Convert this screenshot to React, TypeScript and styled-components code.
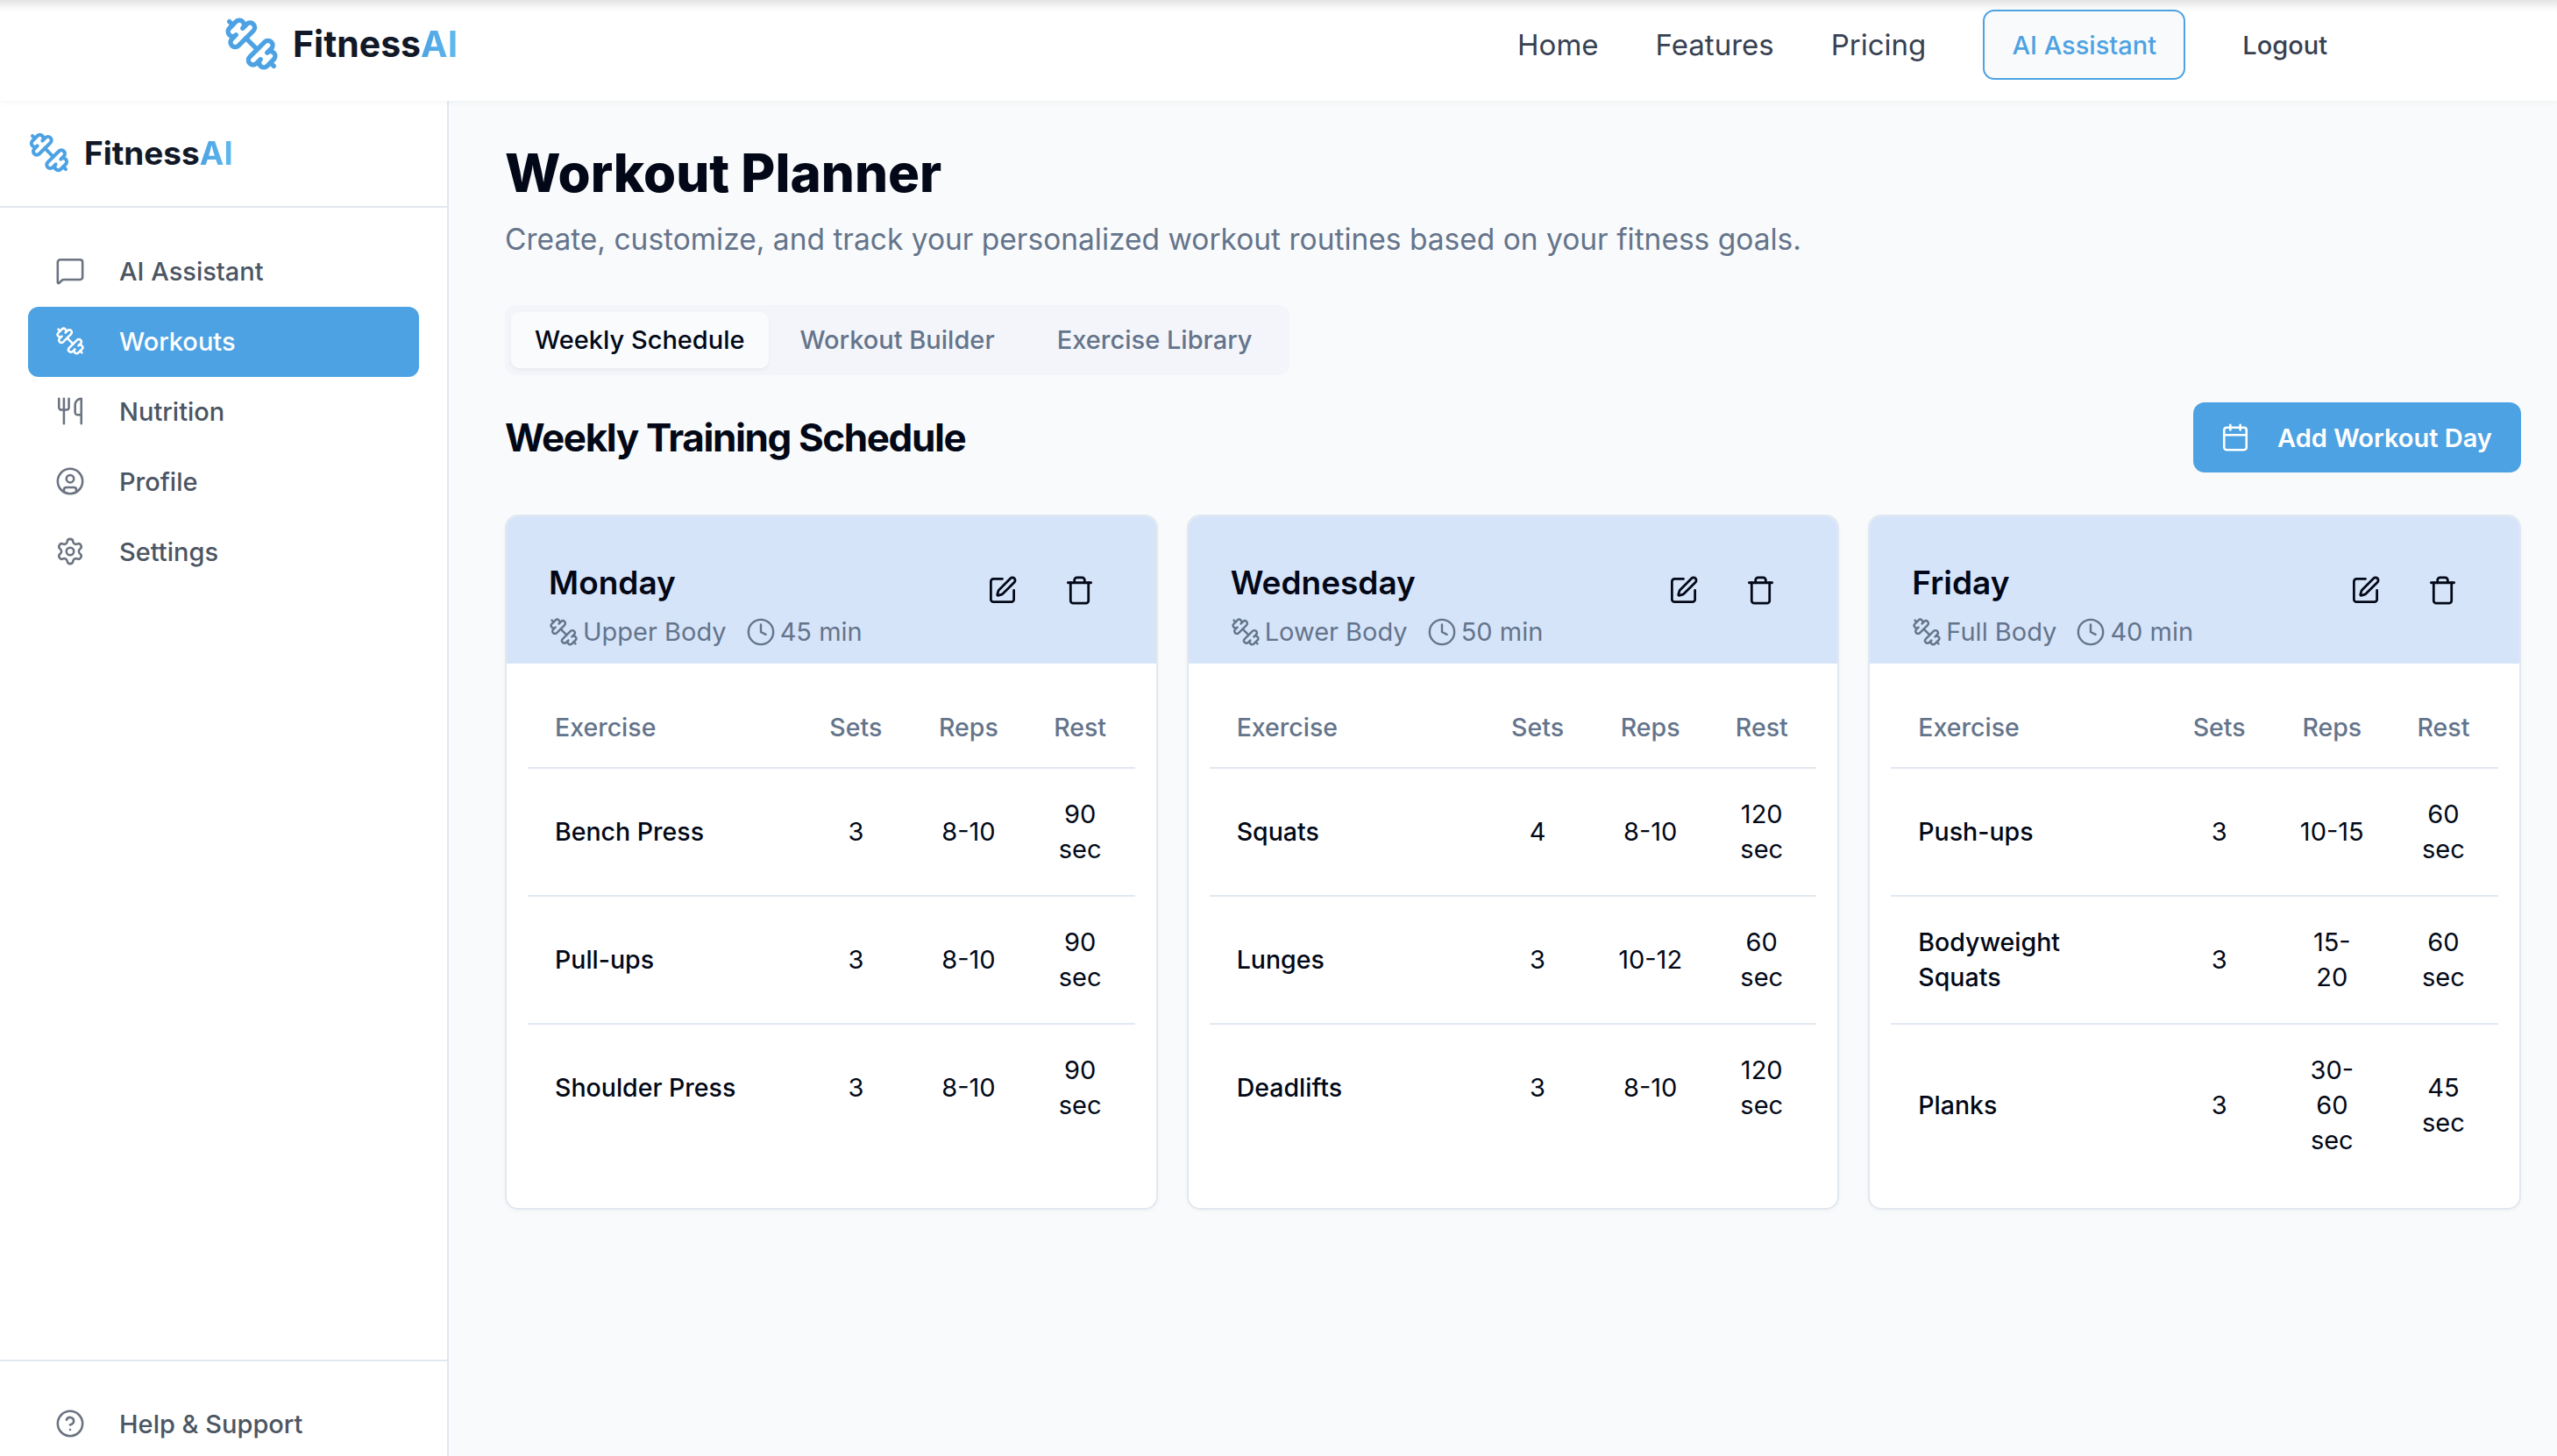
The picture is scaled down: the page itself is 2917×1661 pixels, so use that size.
import React from "react";
import styled, { createGlobalStyle } from "styled-components";
import {
  Calendar,
  CircleHelp,
  CircleUser,
  Clock,
  Dumbbell,
  MessageSquare,
  Settings,
  SquarePen,
  Trash,
  Utensils,
} from "lucide-react";

interface Exercise {
  name: string;
  sets: number;
  reps: string;
  rest: string;
}

interface WorkoutDay {
  day: string;
  focus: string;
  duration: string;
  exercises: Exercise[];
}

// the bar in the picture runs top-left to bottom-right
const BarbellIcon = styled(Dumbbell)`
  transform: scaleX(-1);
  flex-shrink: 0;
`;

const DAYS: WorkoutDay[] = [
  {
    day: "Monday",
    focus: "Upper Body",
    duration: "45 min",
    exercises: [
      { name: "Bench Press", sets: 3, reps: "8-10", rest: "90\nsec" },
      { name: "Pull-ups", sets: 3, reps: "8-10", rest: "90\nsec" },
      { name: "Shoulder Press", sets: 3, reps: "8-10", rest: "90\nsec" },
    ],
  },
  {
    day: "Wednesday",
    focus: "Lower Body",
    duration: "50 min",
    exercises: [
      { name: "Squats", sets: 4, reps: "8-10", rest: "120\nsec" },
      { name: "Lunges", sets: 3, reps: "10-12", rest: "60\nsec" },
      { name: "Deadlifts", sets: 3, reps: "8-10", rest: "120\nsec" },
    ],
  },
  {
    day: "Friday",
    focus: "Full Body",
    duration: "40 min",
    exercises: [
      { name: "Push-ups", sets: 3, reps: "10-15", rest: "60\nsec" },
      { name: "Bodyweight\nSquats", sets: 3, reps: "15-\n20", rest: "60\nsec" },
      { name: "Planks", sets: 3, reps: "30-\n60\nsec", rest: "45\nsec" },
    ],
  },
];

const SIDE_ITEMS = [
  { label: "AI Assistant", icon: MessageSquare },
  { label: "Workouts", icon: BarbellIcon, active: true },
  { label: "Nutrition", icon: Utensils },
  { label: "Profile", icon: CircleUser },
  { label: "Settings", icon: Settings },
];

const GlobalStyle = createGlobalStyle`
  html, body {
    margin: 0;
    height: 100%;
    overflow: hidden;
    background: #ffffff;
    font-family: "Inter", "Liberation Sans", sans-serif;
  }
  * { box-sizing: border-box; }
`;

const Page = styled.div`
  height: 100vh;
  display: flex;
  flex-direction: column;
  overflow: hidden;
`;

const TopNav = styled.header`
  height: 115px;
  flex-shrink: 0;
  display: flex;
  align-items: flex-start;
  justify-content: space-between;
  padding: 11px 262px 0 255px;
  background: #fff;
  box-shadow: inset 0 14px 12px -10px rgba(0, 0, 0, 0.14), 0 2px 6px rgba(0, 0, 0, 0.04);
  position: relative;
  z-index: 2;
`;

const Brand = styled.div<{ $small?: boolean }>`
  display: flex;
  align-items: center;
  gap: ${({ $small }) => ($small ? "16px" : "15px")};
  height: ${({ $small }) => ($small ? "auto" : "80px")};
  padding-bottom: 2px;
  font-size: ${({ $small }) => ($small ? "37px" : "41px")};
  font-weight: 700;
  color: #111827;
`;

const BrandAccent = styled.span`
  color: #4da2e3;
  background: linear-gradient(90deg, #4da2e3, #60bbee);
  -webkit-background-clip: text;
  background-clip: text;
  -webkit-text-fill-color: transparent;
`;

const NavLinks = styled.nav`
  display: flex;
  align-items: center;
  height: 80px;
`;

const NavLink = styled.a`
  font-size: 33px;
  color: #374151;
  margin-right: 65px;
`;

const AssistantButton = styled.button`
  width: 231px;
  height: 80px;
  border: 2px solid #4da2e3;
  border-radius: 13px;
  background: #f9fafb;
  color: #4da2e3;
  font: 500 29px "Inter", sans-serif;
  margin-right: 65px;
`;

const LogoutLink = styled.a`
  font-size: 29px;
  font-weight: 500;
  color: #374151;
`;

const Body = styled.div`
  flex: 1;
  min-height: 0;
  display: flex;
`;

const Sidebar = styled.aside`
  width: 512px;
  flex-shrink: 0;
  display: flex;
  flex-direction: column;
  background: #fff;
  border-right: 2px solid #e2e8f0;
`;

const SidebarHead = styled.div`
  height: 122px;
  display: flex;
  align-items: center;
  padding: 0 32px;
  border-bottom: 2px solid #e2e8f0;
`;

const SideList = styled.ul`
  flex: 1;
  list-style: none;
  margin: 0;
  padding: 33px 32px 0;
  display: flex;
  flex-direction: column;
`;

const SideItem = styled.li<{ $active?: boolean }>`
  height: 80px;
  display: flex;
  align-items: center;
  gap: 39px;
  padding: 0 0 2px 31px;
  border-radius: 12px;
  font-size: 29px;
  font-weight: 500;
  color: ${({ $active }) => ($active ? "#ffffff" : "#4b5563")};
  background: ${({ $active }) => ($active ? "#4da2e3" : "transparent")};
  svg {
    color: ${({ $active }) => ($active ? "#ffffff" : "#6b7280")};
  }
`;

const SideFooter = styled.div`
  border-top: 2px solid #e2e8f0;
  padding: 32px 32px 0;
  height: 110px;
  flex-shrink: 0;
`;

const Main = styled.main`
  flex: 1;
  min-width: 0;
  background: #f9fafb;
  padding: 47px 41px 0 64px;
`;

const Title = styled.h1`
  margin: 0;
  font-size: 60px;
  line-height: 70px;
  font-weight: 800;
  color: #020817;
`;

const Subtitle = styled.p`
  margin: 17px 0 0;
  font-size: 33.5px;
  line-height: 48px;
  color: #64748b;
`;

const Tabs = styled.div`
  margin-top: 51px;
  width: 895px;
  height: 80px;
  display: grid;
  grid-template-columns: repeat(3, 1fr);
  align-items: center;
  padding: 0 7px;
  border-radius: 12px;
  background: #f3f5fa;
`;

const Tab = styled.div<{ $active?: boolean }>`
  height: 64px;
  display: flex;
  align-items: center;
  justify-content: center;
  padding-bottom: 2px;
  border-radius: 9px;
  font-size: 29px;
  font-weight: 500;
  color: ${({ $active }) => ($active ? "#020817" : "#64748b")};
  background: ${({ $active }) => ($active ? "#f9fbfd" : "transparent")};
  box-shadow: ${({ $active }) => ($active ? "0 2px 4px rgba(0, 0, 0, 0.05)" : "none")};
`;

const SectionHead = styled.div`
  margin-top: 31px;
  display: flex;
  align-items: center;
  justify-content: space-between;
`;

const SectionTitle = styled.h2`
  margin: 0;
  font-size: 44px;
  font-weight: 700;
  letter-spacing: -1.4px;
  color: #020817;
`;

const AddButton = styled.button`
  width: 374px;
  height: 80px;
  display: flex;
  align-items: center;
  gap: 31px;
  padding: 0 0 0 31px;
  border: 0;
  border-radius: 13px;
  background: #4da2e3;
  color: #fff;
  font: 600 29px "Inter", sans-serif;
`;

const CardGrid = styled.div`
  margin-top: 48px;
  display: grid;
  grid-template-columns: repeat(3, 1fr);
  gap: 33px;
`;

const Card = styled.section`
  height: 793px;
  border: 2px solid #e2e8f0;
  border-radius: 15px;
  background: #fff;
  overflow: hidden;
  box-shadow: 0 2px 4px rgba(0, 0, 0, 0.03);
`;

const CardHead = styled.div`
  height: 168px;
  display: flex;
  justify-content: space-between;
  padding: 53px 70px 0 48px;
  background: #d6e4fa;
`;

const DayName = styled.h3`
  margin: 0;
  font-size: 37px;
  line-height: 46px;
  font-weight: 600;
  color: #020817;
`;

const DayMeta = styled.div`
  margin-top: 13px;
  display: flex;
  align-items: center;
  gap: 5px;
  font-size: 29px;
  line-height: 40px;
  color: #64748b;
`;

const MetaGap = styled.span`
  width: 12px;
`;

const CardActions = styled.div`
  display: flex;
  gap: 53px;
  padding-top: 14px;
  color: #020817;
`;

const CardBody = styled.div`
  padding: 0 24px;
`;

const Table = styled.table`
  width: 100%;
  table-layout: fixed;
  border-collapse: collapse;
`;

const HeadCell = styled.th<{ $left?: boolean }>`
  height: 119px;
  padding: 26px 0 0 ${({ $left }) => ($left ? "31px" : "0")};
  font-size: 28.5px;
  font-weight: 500;
  color: #64748b;
  text-align: ${({ $left }) => ($left ? "left" : "center")};
  border-bottom: 2px solid #e2e8f0;
`;

const Row = styled.tr`
  & + & td {
    border-top: 2px solid #e2e8f0;
  }
`;

const Cell = styled.td<{ $name?: boolean }>`
  padding: 32px 0 32px ${({ $name }) => ($name ? "31px" : "0")};
  font-size: ${({ $name }) => ($name ? "28.5px" : "29px")};
  line-height: 40px;
  font-weight: ${({ $name }) => ($name ? 500 : 400)};
  color: #020817;
  text-align: ${({ $name }) => ($name ? "left" : "center")};
  white-space: pre-line;
`;

const WorkoutCard: React.FC<{ day: WorkoutDay }> = ({ day }) => (
  <Card>
    <CardHead>
      <div>
        <DayName>{day.day}</DayName>
        <DayMeta>
          <BarbellIcon size={34} strokeWidth={1.7} />
          {day.focus}
          <MetaGap />
          <Clock size={34} strokeWidth={1.7} />
          {day.duration}
        </DayMeta>
      </div>
      <CardActions>
        <SquarePen size={35} strokeWidth={1.9} />
        <Trash size={35} strokeWidth={1.9} />
      </CardActions>
    </CardHead>
    <CardBody>
      <Table>
        <colgroup>
          <col style={{ width: 310 }} />
          <col style={{ width: 128 }} />
          <col style={{ width: 129 }} />
          <col style={{ width: 125 }} />
        </colgroup>
        <thead>
          <tr>
            <HeadCell $left>Exercise</HeadCell>
            <HeadCell>Sets</HeadCell>
            <HeadCell>Reps</HeadCell>
            <HeadCell>Rest</HeadCell>
          </tr>
        </thead>
        <tbody>
          {day.exercises.map((ex) => (
            <Row key={ex.name}>
              <Cell $name>{ex.name}</Cell>
              <Cell>{ex.sets}</Cell>
              <Cell>{ex.reps}</Cell>
              <Cell>{ex.rest}</Cell>
            </Row>
          ))}
        </tbody>
      </Table>
    </CardBody>
  </Card>
);

const App: React.FC = () => (
  <Page>
    <GlobalStyle />
    <TopNav>
      <Brand>
        <BarbellIcon size={64} color="#4da2e3" strokeWidth={2} />
        <span>
          Fitness<BrandAccent>AI</BrandAccent>
        </span>
      </Brand>
      <NavLinks>
        <NavLink>Home</NavLink>
        <NavLink>Features</NavLink>
        <NavLink>Pricing</NavLink>
        <AssistantButton>AI Assistant</AssistantButton>
        <LogoutLink>Logout</LogoutLink>
      </NavLinks>
    </TopNav>
    <Body>
      <Sidebar>
        <SidebarHead>
          <Brand $small>
            <BarbellIcon size={48} color="#4da2e3" strokeWidth={2} />
            <span>
              Fitness<BrandAccent>AI</BrandAccent>
            </span>
          </Brand>
        </SidebarHead>
        <SideList>
          {SIDE_ITEMS.map(({ label, icon: Icon, active }) => (
            <SideItem key={label} $active={active}>
              <Icon size={34} strokeWidth={1.8} />
              {label}
            </SideItem>
          ))}
        </SideList>
        <SideFooter>
          <SideItem as="div">
            <CircleHelp size={34} strokeWidth={1.8} />
            Help &amp; Support
          </SideItem>
        </SideFooter>
      </Sidebar>
      <Main>
        <Title>Workout Planner</Title>
        <Subtitle>
          Create, customize, and track your personalized workout routines based on your fitness goals.
        </Subtitle>
        <Tabs>
          <Tab $active>Weekly Schedule</Tab>
          <Tab>Workout Builder</Tab>
          <Tab>Exercise Library</Tab>
        </Tabs>
        <SectionHead>
          <SectionTitle>Weekly Training Schedule</SectionTitle>
          <AddButton>
            <Calendar size={34} strokeWidth={1.8} />
            Add Workout Day
          </AddButton>
        </SectionHead>
        <CardGrid>
          {DAYS.map((d) => (
            <WorkoutCard key={d.day} day={d} />
          ))}
        </CardGrid>
      </Main>
    </Body>
  </Page>
);

export default App;
